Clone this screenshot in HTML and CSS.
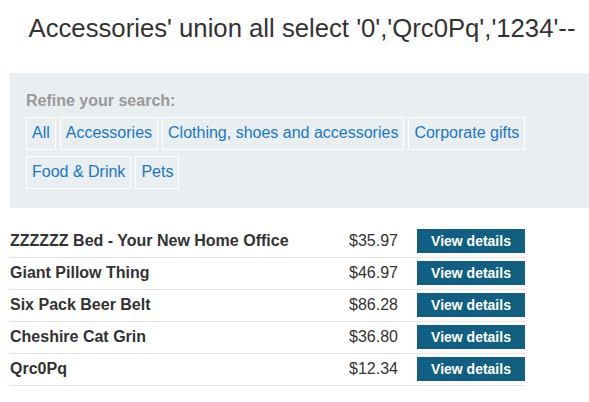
FILE: index.html
```html
<!DOCTYPE html>
<html lang="en">
<head>
<meta charset="utf-8">
<title>Accessories</title>
<link rel="stylesheet" href="styles.css">
</head>
<body>
<div class="page">
  <h1 class="title">Accessories' union all select '0','Qrc0Pq','1234'--</h1>
  <section class="filters">
    <div class="filters-label">Refine your search:</div>
    <div class="tags">
      <a class="tag" href="#">All</a>
      <a class="tag" href="#">Accessories</a>
      <a class="tag" href="#">Clothing, shoes and accessories</a>
      <a class="tag" href="#">Corporate gifts</a>
      <a class="tag" href="#">Food &amp; Drink</a>
      <a class="tag" href="#">Pets</a>
    </div>
  </section>
  <div class="products">
    <div class="product">
      <span class="name">ZZZZZZ Bed - Your New Home Office</span>
      <span class="price">$35.97</span>
      <a class="btn" href="#">View details</a>
    </div>
    <div class="product">
      <span class="name">Giant Pillow Thing</span>
      <span class="price">$46.97</span>
      <a class="btn" href="#">View details</a>
    </div>
    <div class="product">
      <span class="name">Six Pack Beer Belt</span>
      <span class="price">$86.28</span>
      <a class="btn" href="#">View details</a>
    </div>
    <div class="product">
      <span class="name">Cheshire Cat Grin</span>
      <span class="price">$36.80</span>
      <a class="btn" href="#">View details</a>
    </div>
    <div class="product">
      <span class="name">Qrc0Pq</span>
      <span class="price">$12.34</span>
      <a class="btn" href="#">View details</a>
    </div>
  </div>
</div>
</body>
</html>
```

FILE: styles.css
```css
html, body {
  margin: 0;
  padding: 0;
  overflow: hidden;
  background: #ffffff;
}
body {
  font-family: "Liberation Sans", Arial, sans-serif;
  color: #333333;
}
.page {
  width: 584px;
  padding: 0 10px;
}
.title {
  margin: 13px 0 30px;
  font-size: 25.7px;
  font-weight: normal;
  line-height: 30px;
  text-align: center;
  color: #333333;
  white-space: nowrap;
}
.filters {
  background: #e9eef1;
  padding: 19px 16px 19px;
}
.filters-label {
  font-size: 16px;
  font-weight: bold;
  color: #999999;
  line-height: 18px;
  margin-bottom: 7px;
}
.tags {
  display: flex;
  flex-wrap: wrap;
  gap: 6px 4px;
}
.tag {
  display: block;
  border: 1px solid #ffffff;
  padding: 6px 5px 7px;
  font-size: 16px;
  line-height: 18px;
  color: #1a78c2;
  text-decoration: none;
}
.products {
  width: 515px;
  margin-top: 18px;
}
.product {
  display: flex;
  align-items: center;
  padding: 3px 0 4px;
  border-bottom: 1px solid #e3e3e3;
}
.name {
  flex: 1;
  font-size: 16px;
  font-weight: bold;
  color: #333333;
}
.price {
  font-size: 16px;
  color: #333333;
  margin-right: 19px;
}
.btn {
  display: block;
  width: 108px;
  height: 24px;
  line-height: 24px;
  text-align: center;
  background: #115f82;
  color: #ffffff;
  font-size: 14px;
  font-weight: bold;
  text-decoration: none;
}
```
